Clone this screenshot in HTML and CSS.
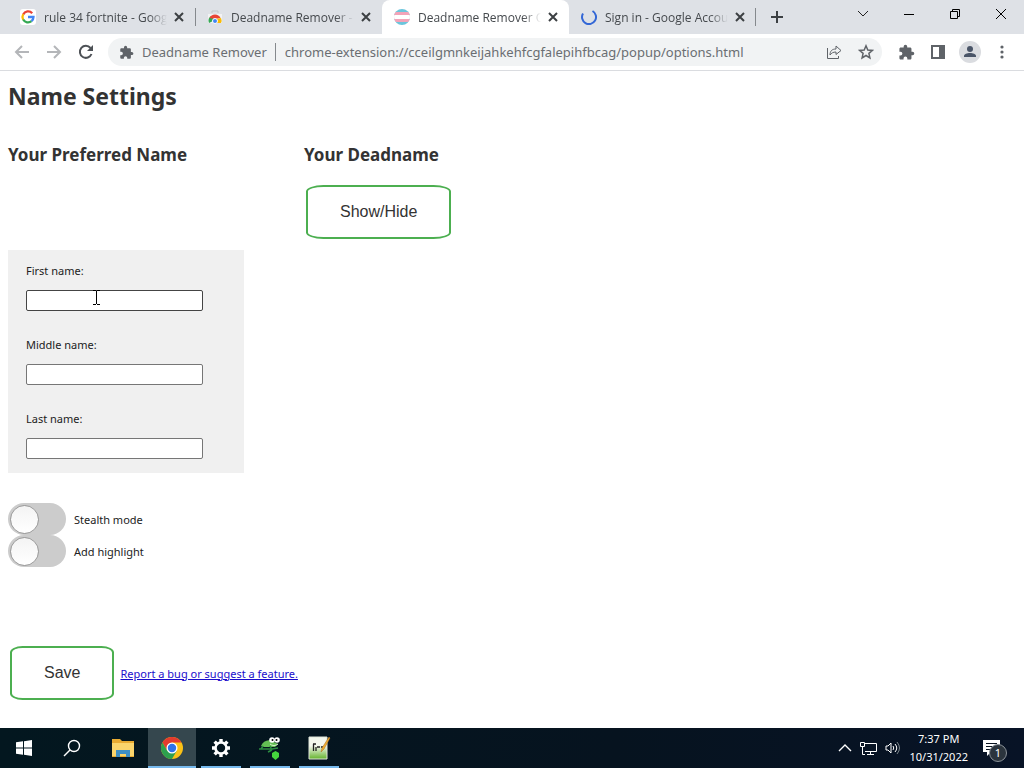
FILE: index.html
```html
<!DOCTYPE html>
<html lang="en">
  <head>
    <meta charset="UTF-8" />
    <meta name="viewport" content="width=device-width, initial-scale=1.0" />
    <title>Deadname Remover Options</title>
    <link rel="stylesheet" href="styles.css">
  </head>
  <body>
    <svg class="defs" width="0" height="0" aria-hidden="true">
      <symbol id="x" viewBox="0 0 16 16">
        <path d="M4 4l8 8M12 4l-8 8" stroke="#3c4043" stroke-width="2" fill="none" />
      </symbol>
      <symbol id="puzzle" viewBox="0 0 24 24">
        <path fill="#5f6368" d="M20.500 11H19V7c0-1.100-.9-2-2-2h-4V3.500a2.500 2.500 0 0 0-5 0V5H4c-1.100 0-2 .9-2 2v3.800h1.500a2.700 2.700 0 0 1 0 5.400H2V20c0 1.100.9 2 2 2h3.800v-1.500a2.700 2.700 0 0 1 5.400 0V22H17c1.100 0 2-.9 2-2v-4h1.500a2.500 2.500 0 0 0 0-5z" />
      </symbol>
    </svg>

    <header class="browser">
      <div class="tabstrip">
        <div class="tab">
          <svg class="favicon" viewBox="0 0 16 16">
            <rect width="16" height="16" rx="3" fill="#fff" />
            <g fill="none" stroke-width="2.300">
              <path d="M12.200 4.200A5.500 5.500 0 0 0 3.200 5.500" stroke="#ea4335" />
              <path d="M3.200 5.300a5.500 5.500 0 0 0 0 5.400" stroke="#fbbc05" />
              <path d="M3.200 10.500a5.500 5.500 0 0 0 8.300 1.700" stroke="#34a853" />
              <path d="M8 8h5.500a5.500 5.500 0 0 1-2 4.200" stroke="#4285f4" />
            </g>
          </svg>
          <span class="tab--title">rule 34 fortnite - Google Search</span>
          <button class="tab--close" aria-label="Close tab"><svg width="16" height="16"><use href="#x" /></svg></button>
        </div>
        <div class="tab divided">
          <svg class="favicon" viewBox="0 0 16 16">
            <path d="M1 5h14v9H1z" fill="#f1f3f4" />
            <path d="M5 4V2h6v2" fill="none" stroke="#c4c7ca" />
            <path d="M2 14a6 6 0 0 1 2-7l4 4z" fill="#34a853" />
            <path d="M2.500 9A6 6 0 0 1 13.500 9L8 10z" fill="#ea4335" />
            <path d="M9 10l5-1a6 6 0 0 1 0 5h-4z" fill="#fbbc05" />
            <circle cx="8" cy="12" r="2.500" fill="#4285f4" stroke="#fff" />
          </svg>
          <span class="tab--title">Deadname Remover - Chrome Web Store</span>
          <button class="tab--close" aria-label="Close tab"><svg width="16" height="16"><use href="#x" /></svg></button>
        </div>
        <div class="tab active">
          <svg class="favicon" viewBox="0 0 16 16">
            <clipPath id="round"><circle cx="8" cy="8" r="8" /></clipPath>
            <g clip-path="url(#round)">
              <rect width="16" height="16" fill="#6cc5dc" />
              <rect y="3" width="16" height="10" fill="#f3a3b8" />
              <rect y="6" width="16" height="4" fill="#fff" />
            </g>
          </svg>
          <span class="tab--title">Deadname Remover Options</span>
          <button class="tab--close" aria-label="Close tab"><svg width="16" height="16"><use href="#x" /></svg></button>
        </div>
        <div class="tab divided-end">
          <svg class="favicon" viewBox="0 0 16 16">
            <path d="M11.500 2a7 7 0 1 1-9.500 2.500" fill="none" stroke="#3367d6" stroke-width="2" />
          </svg>
          <span class="tab--title">Sign in - Google Accounts</span>
          <button class="tab--close" aria-label="Close tab"><svg width="16" height="16"><use href="#x" /></svg></button>
        </div>
        <button class="new-tab" aria-label="New tab">
          <svg width="14" height="14"><path d="M7 1v12M1 7h12" stroke="#3c4043" stroke-width="2" /></svg>
        </button>
        <div class="window-controls">
          <button aria-label="Search tabs"><svg width="12" height="12"><path d="M1 3l5 5 5-5" fill="none" stroke="#222" /></svg></button>
          <button aria-label="Minimize"><svg width="10" height="12"><path d="M0 6.500h10" stroke="#000" /></svg></button>
          <button aria-label="Restore"><svg width="12" height="12"><path d="M1.500 3.500h7v7h-7zM3.500 3.500v-2h7v7h-2" fill="none" stroke="#000" /></svg></button>
          <button aria-label="Close"><svg width="12" height="12"><path d="M1 1l10 10M11 1L1 11" stroke="#000" /></svg></button>
        </div>
      </div>

      <div class="toolbar">
        <button class="tool" aria-label="Back"><svg width="16" height="16"><path d="M15 8H2M8 2L2 8l6 6" fill="none" stroke="#b4b6b9" stroke-width="2" /></svg></button>
        <button class="tool" aria-label="Forward"><svg width="16" height="16"><path d="M1 8h13M8 2l6 6-6 6" fill="none" stroke="#b4b6b9" stroke-width="2" /></svg></button>
        <button class="tool" aria-label="Reload"><svg width="16" height="16"><path d="M13.500 10A6 6 0 1 1 12.500 4" fill="none" stroke="#4d5156" stroke-width="2" /><path d="M15 1v6H9z" fill="#4d5156" /></svg></button>
        <div class="omnibox">
          <svg width="15" height="15"><use href="#puzzle" /></svg>
          <span class="origin">Deadname Remover</span>
          <input class="url" type="text" aria-label="Address" value="chrome-extension://cceilgmnkeijahkehfcgfalepihfbcag/popup/options.html" />
          <button class="tool" aria-label="Share"><svg width="16" height="16"><path d="M1.500 4v10.500h11V12" fill="none" stroke="#5f6368" /><path d="M4 11c0-4 2-6 6-6V2l5 4.500-5 4V8C7 8 5.500 9 4 11z" fill="none" stroke="#5f6368" /></svg></button>
          <button class="tool" aria-label="Bookmark"><svg width="16" height="16"><path d="M8 1.800l1.800 4.200 4.600.4-3.500 3 1 4.500L8 11.500l-3.900 2.400 1-4.500-3.500-3 4.600-.4z" fill="none" stroke="#5f6368" stroke-width="1.500" /></svg></button>
        </div>
        <button class="tool" aria-label="Extensions"><svg width="17" height="17"><use href="#puzzle" /></svg></button>
        <button class="tool" aria-label="Side panel"><svg width="16" height="16"><path d="M2 2h12v12H2z" fill="none" stroke="#5f6368" stroke-width="2" /><path d="M9 2h5v12H9z" fill="#5f6368" /></svg></button>
        <button class="tool" aria-label="Profile"><svg width="22" height="22"><circle cx="11" cy="11" r="11" fill="#dadce0" /><circle cx="11" cy="8" r="3" fill="#4a5568" /><path d="M5 16v-1c0-2 3-3 6-3s6 1 6 3v1z" fill="#4a5568" /></svg></button>
        <button class="tool" aria-label="Menu"><svg width="16" height="16" fill="#5f6368"><circle cx="8" cy="3" r="1.600" /><circle cx="8" cy="8" r="1.600" /><circle cx="8" cy="13" r="1.600" /></svg></button>
      </div>
    </header>

    <main class="page">
      <h1>Name Settings</h1>
      <div class="names">
        <section>
          <h2>Your Preferred Name</h2>
          <div class="name-form">
            <div class="field">
              <label for="first">First name:</label>
              <input id="first" class="hovered" type="text" />
              <svg class="ibeam" width="9" height="17"><path d="M1 1.500h3M5 1.500h3M4.500 2v13M1 15.500h3M5 15.500h3" fill="none" stroke="#000" /></svg>
            </div>
            <div class="field">
              <label for="middle">Middle name:</label>
              <input id="middle" type="text" />
            </div>
            <div class="field">
              <label for="last">Last name:</label>
              <input id="last" type="text" />
            </div>
          </div>
        </section>
        <section>
          <h2>Your Deadname</h2>
          <button class="button" type="button">Show/Hide</button>
        </section>
      </div>

      <div class="option">
        <input class="switch" id="stealth" type="checkbox" />
        <label for="stealth">Stealth mode</label>
      </div>
      <div class="option">
        <input class="switch" id="highlight" type="checkbox" />
        <label for="highlight">Add highlight</label>
      </div>

      <div class="actions">
        <button class="button" type="button">Save</button>
        <a href="#">Report a bug or suggest a feature.</a>
      </div>
    </main>

    <footer class="taskbar">
      <button class="task" aria-label="Start"><svg width="16" height="16" fill="#fff"><path d="M0 2.300l7-1v6.200H0zM8 1.200L16 0v7.500H8zM0 8.500h7v6.200l-7-1zM8 8.500h8V16l-8-1.200z" /></svg></button>
      <button class="task" aria-label="Search"><svg width="18" height="18" fill="none" stroke="#fff" stroke-width="1.400"><circle cx="11" cy="7" r="5.500" /><path d="M7 11l-6 6" /></svg></button>
      <div class="apps">
        <button class="task" aria-label="File Explorer">
          <svg width="22" height="20"><path d="M0 1h8l2 2h12v16H0z" fill="#e9ab32" /><path d="M0 5h22v13H0z" fill="#fbd56c" /><path d="M4 19v-7h14v7h-4v-3H8v3z" fill="#3f8fc4" /></svg>
        </button>
        <button class="task running current" aria-label="Google Chrome">
          <svg width="22" height="22" viewBox="0 0 24 24">
            <circle cx="12" cy="12" r="12" fill="#fbc116" />
            <path d="M1.600 6A12 12 0 0 1 22.400 6H12l-5.200 9z" fill="#e33b2e" />
            <path d="M1.600 6A12 12 0 0 0 12 24l5.200-9H6.800z" fill="#2da04e" />
            <circle cx="12" cy="12" r="6" fill="#fff" />
            <circle cx="12" cy="12" r="4.600" fill="#2f73e8" />
          </svg>
        </button>
        <button class="task running" aria-label="Settings">
          <svg width="20" height="20" viewBox="-10 -10 20 20" stroke="#fff" fill="none">
            <circle r="5.500" stroke-width="2.600" />
            <path stroke-width="3.400" d="M0-9v3M0 9V6M-9 0h3M9 0H6M-6.400-6.400l2.200 2.200M6.400 6.400L4.200 4.200M-6.400 6.400l2.200-2.200M6.400-6.400L4.200-4.200" />
          </svg>
        </button>
        <button class="task running" aria-label="Chameleon">
          <svg width="24" height="24">
            <path d="M3 10c2-5 7-7 11-5l6 3-3 3H6z" fill="#63bd54" />
            <path d="M1 13h13l6-1M5 10l-2 3M12 10l2 4M14 14l-4 2" fill="none" stroke="#2c8c42" stroke-width="1.500" />
            <circle cx="14" cy="4" r="2.800" fill="#fff" /><circle cx="19" cy="4" r="2.800" fill="#fff" />
            <circle cx="14.500" cy="4" r="1" /><circle cx="18.500" cy="4" r="1" />
            <path d="M12 8c2 2 6 2 8 0" fill="none" stroke="#d8f0d0" />
            <path d="M14 17l3.500-2 3.500 2v4l-3.500 3-3.500-3z" fill="#45d53d" />
          </svg>
        </button>
        <button class="task running" aria-label="Notepad++">
          <svg width="24" height="24">
            <linearGradient id="pad" x2="0" y2="1"><stop offset=".4" stop-color="#f4f8ee" /><stop offset="1" stop-color="#64b32c" /></linearGradient>
            <path d="M2 1h18v22H2z" fill="url(#pad)" stroke="#dfe5da" />
            <path d="M6.500 8v7M6 8h3M9 11v4M10 11h3M14 11h2" fill="none" stroke="#222" stroke-width="1.300" />
            <path d="M22 1l1 1-6 11-3 3 1-4z" fill="#f0b02f" stroke="#a8681e" stroke-width=".5" />
          </svg>
        </button>
      </div>
      <div class="tray">
        <button aria-label="Show hidden icons"><svg width="14" height="12"><path d="M1 9l6-6 6 6" fill="none" stroke="#fff" stroke-width="1.400" /></svg></button>
        <button aria-label="Network"><svg width="17" height="14" fill="none" stroke="#fff"><path d="M5 2.500h11.500v8H5M10.500 11v2M7 13.500h7M.5 1.500h4v4h-4zM2.500 6v7.500H5" /></svg></button>
        <button aria-label="Volume"><svg width="16" height="14" fill="none" stroke="#fff"><path d="M1 5h2l3-3v10L3 9H1zM8 5q1.500 2 0 4M10 3q3.500 4 0 8" /><path d="M12 1q5 6 0 12" stroke="#7c868c" /></svg></button>
        <button class="clock"><span>7:37 PM</span><span>10/31/2022</span></button>
        <button class="notices" aria-label="Notifications">
          <svg width="17" height="16"><path d="M0 0h17v12H8l-4 4v-4H0z" fill="#fff" /><path d="M3 3.500h11M3 6.500h11M3 9.500h7" stroke="#0a1420" /></svg>
          <span class="badge">1</span>
        </button>
      </div>
    </footer>
  </body>
</html>
```

FILE: styles.css
```css
* {
  box-sizing: border-box;
}

body {
  margin: 0;
  min-height: 100vh;
  display: flex;
  flex-direction: column;
  font-family: "Noto Sans", "Open Sans", sans-serif;
  font-size: 11px;
  color: #222;
  background-color: #fff;
}

button {
  font-family: inherit;
  padding: 0;
  border: none;
  background: none;
}

svg {
  display: block;
  flex-shrink: 0;
}

.defs {
  position: absolute;
}

/* tabs */

.tabstrip {
  display: flex;
  height: 34px;
  padding-left: 8px;
  background-color: #dee1e6;
  font-family: "Open Sans", "Noto Sans", sans-serif;
  font-size: 12px;
}

.tab {
  display: flex;
  align-items: center;
  flex: 0 1 187px;
  min-width: 0;
  padding: 0 8px 0 12px;
  color: #45494d;
}

.tab.active {
  background-color: #fff;
  border-radius: 8px 8px 0 0;
}

.divided,
.divided-end {
  background: linear-gradient(#85898d, #85898d) left center / 1px 18px no-repeat;
}

.divided-end {
  background-position: right center;
}

.favicon {
  width: 16px;
  height: 16px;
  margin-right: 8px;
}

.tab--title {
  flex: 1;
  overflow: hidden;
  white-space: nowrap;
  margin-right: 4px;
  mask-image: linear-gradient(to right, #000 85%, transparent);
}

.new-tab {
  width: 28px;
  margin-left: 7px;
  display: grid;
  place-items: center;
}

.window-controls {
  display: flex;
  height: 28px;
  margin-left: auto;
}

.window-controls button {
  width: 46px;
  display: grid;
  place-items: center;
}

/* toolbar */

.toolbar {
  display: flex;
  align-items: center;
  height: 37px;
  padding: 0 6px;
  border-bottom: 1px solid #dadce0;
}

.tool {
  width: 32px;
  height: 28px;
  flex-shrink: 0;
  display: grid;
  place-items: center;
}

.omnibox {
  flex: 1;
  display: flex;
  align-items: center;
  height: 28px;
  margin: 0 8px 0 6px;
  padding-left: 11px;
  border-radius: 14px;
  background-color: #f1f3f4;
  font-size: 13px;
  color: #6a6e72;
}

.origin {
  margin-left: 8px;
  padding-right: 8px;
  line-height: 18px;
  white-space: nowrap;
  border-right: 1px solid #85898d;
}

.url {
  flex: 1;
  min-width: 0;
  padding: 0 0 0 9px;
  border: none;
  outline: none;
  background: none;
  font: inherit;
  color: inherit;
}

/* settings page */

.page {
  flex: 1;
  padding: 8px;
}

h1 {
  margin: 0;
  font-size: 23px;
  line-height: 34px;
  color: #333;
}

.names {
  display: grid;
  grid-template-columns: 236px 236px;
  column-gap: 60px;
  margin-top: 30px;
}

h2 {
  margin: 0;
  font-size: 17px;
  line-height: 24px;
  color: #333;
  white-space: nowrap;
}

.name-form {
  display: flex;
  flex-direction: column;
  gap: 24px;
  margin-top: 83px;
  padding: 11px 18px 14px;
  background-color: #f0f0f0;
}

.field {
  position: relative;
  display: flex;
  flex-direction: column;
  align-items: flex-start;
  gap: 9px;
}

.field label {
  line-height: 20px;
}

.field input {
  width: 177px;
  height: 21px;
  padding: 1px 2px;
  border: 1px solid #767676;
  border-radius: 2px;
  background-color: #fff;
}

.field .hovered {
  border-color: #444;
}

.ibeam {
  position: absolute;
  left: 66px;
  top: 28px;
}

.button {
  margin: 18px 2px 0;
  padding: 16px 32px;
  border: 2px solid #4caf50;
  border-radius: 12%;
  background-color: #fff;
  color: #333;
  font-family: "Liberation Sans", Arial, sans-serif;
  font-size: 16px;
  line-height: 18px;
}

.option {
  display: flex;
  align-items: center;
  gap: 8px;
}

.names + .option {
  margin-top: 30px;
}

.switch {
  appearance: none;
  width: 58px;
  height: 32px;
  margin: 0;
  padding: 2px;
  border-radius: 16px;
  background-color: #ccc;
}

.switch::before {
  content: "";
  display: block;
  width: 27px;
  height: 27px;
  border: 1px solid #999;
  border-radius: 50%;
  background: linear-gradient(#f4f4f4, #fff);
}

.switch:checked::before {
  margin-left: auto;
}

.actions {
  display: flex;
  align-items: center;
  gap: 4px;
  margin-top: 79px;
}

.actions .button {
  margin-top: 0;
}

.actions a {
  color: #1a0dcc;
}

/* taskbar */

.taskbar {
  display: flex;
  height: 40px;
  color: #fff;
  background: linear-gradient(to right, #03171f, #06131f 60%, #081326);
}

.task {
  width: 48px;
  display: grid;
  place-items: center;
}

.apps {
  display: flex;
  gap: 1px;
  padding-left: 3px;
}

.running {
  background: linear-gradient(#76b9ed, #76b9ed) center bottom / 40px 2px no-repeat;
}

.current {
  background-color: #35474e;
  background-size: 48px 2px;
}

.tray {
  display: flex;
  align-items: center;
  gap: 8px;
  margin-left: auto;
  padding-right: 24px;
}

.tray button {
  color: inherit;
}

.clock {
  display: flex;
  flex-direction: column;
  align-items: center;
  font-size: 11px;
  line-height: 18px;
}

.tray .notices {
  position: relative;
  margin-left: 7px;
}

.badge {
  position: absolute;
  left: 6px;
  top: 4px;
  width: 18px;
  height: 18px;
  border: 1px solid #8b9299;
  border-radius: 50%;
  background-color: #2b343d;
  font-size: 11px;
  line-height: 16px;
  text-align: center;
}
```
